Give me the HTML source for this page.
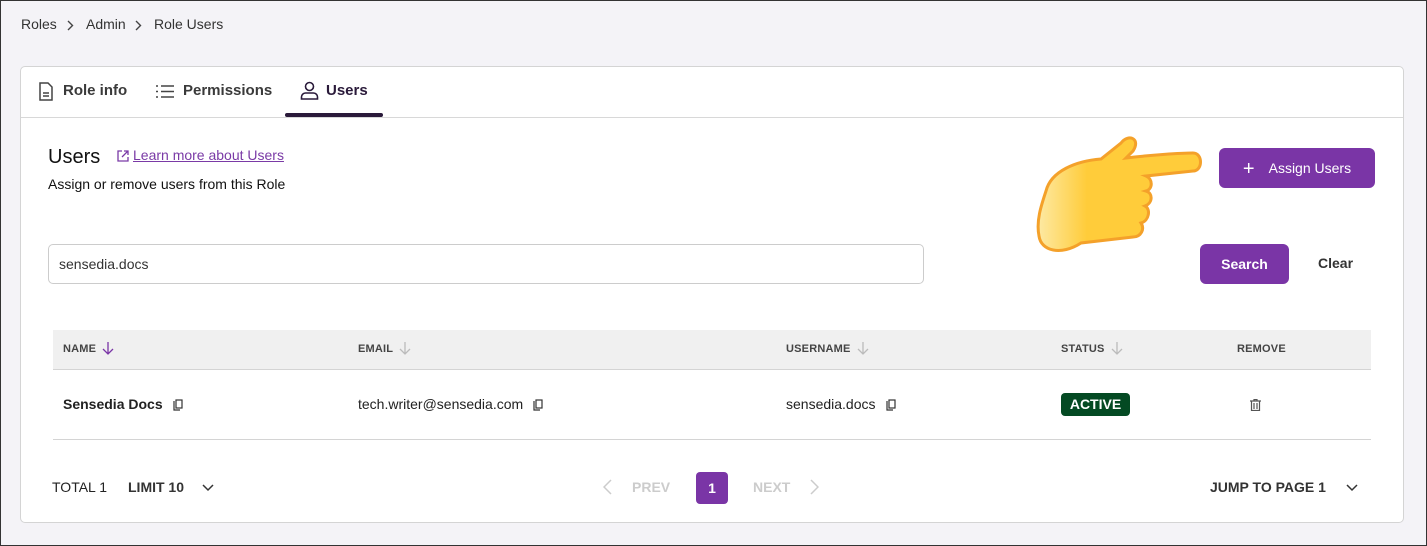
<!DOCTYPE html>
<html><head><style>
*{box-sizing:border-box;margin:0;padding:0}
body{width:1427px;height:546px;background:#f4f3f7;font-family:"Liberation Sans",sans-serif;color:#222;position:relative;overflow:hidden;border:1px solid #333}
.a{position:absolute}
.card{left:19px;top:65px;width:1384px;height:457px;background:#fff;border:1px solid #d4d4d4;border-radius:5px}
.tabs{left:0;top:0;width:100%;height:51px;border-bottom:1px solid #d8d8d8}
.tab{top:15px;font-size:15px;font-weight:bold;color:#3a3a3a}
.th{top:274px;font-size:11px;font-weight:bold;color:#444;letter-spacing:.2px}
.th svg{vertical-align:-3px;margin-left:6px}
.td{top:329px;font-size:14px}
.cp{display:inline-block;vertical-align:middle;margin-left:10px}
</style></head><body>
<div class="a" style="left:20px;top:15px;font-size:14px;color:#333">Roles</div>
<svg class="a" style="left:66px;top:19px" width="7" height="11" viewBox="0 0 7 11" fill="none" stroke="#444" stroke-width="1.4"><path d="M1 1l4.5 4.5L1 10"/></svg>
<div class="a" style="left:85px;top:15px;font-size:14px;color:#333">Admin</div>
<svg class="a" style="left:134px;top:19px" width="7" height="11" viewBox="0 0 7 11" fill="none" stroke="#444" stroke-width="1.4"><path d="M1 1l4.5 4.5L1 10"/></svg>
<div class="a" style="left:153px;top:15px;font-size:14px;color:#333">Role Users</div>
<div class="a card">
 <div class="a tabs"></div>
 <svg class="a" style="left:17px;top:15px" width="16" height="19" viewBox="0 0 16 19" fill="none" stroke="#444" stroke-width="1.5"><path d="M2 1h8l4 4v13H2z"/><path d="M5 11h6M5 14h6"/></svg>
 <div class="a tab" style="left:42px">Role info</div>
 <svg class="a" style="left:135px;top:17px" width="18" height="15" viewBox="0 0 18 15" stroke="#444" stroke-width="1.5"><path d="M5 2h13M5 7.5h13M5 13h13M0 2h2M0 7.5h2M0 13h2"/></svg>
 <div class="a tab" style="left:162px">Permissions</div>
 <svg class="a" style="left:279px;top:14px" width="19" height="19" viewBox="0 0 19 19" fill="none" stroke="#2a1a3a" stroke-width="1.6"><circle cx="9.5" cy="5.5" r="4"/><path d="M1.5 18v-2a4 4 0 0 1 4-4h8a4 4 0 0 1 4 4v2z"/></svg>
 <div class="a tab" style="left:305px;color:#2a1a3a">Users</div>
 <div class="a" style="left:264px;top:46px;width:98px;height:4px;background:#2a1a3a;border-radius:2px"></div>

 <div class="a" style="left:27px;top:79px;font-size:20px;color:#111">Users</div>
 <svg class="a" style="left:96px;top:83px" width="12" height="12" viewBox="0 0 12 12" fill="none" stroke="#7a3aa6" stroke-width="1.3"><path d="M5 1H1v10h10V7M7 1h4v4M11 1L5 7"/></svg>
 <div class="a" style="left:112px;top:80px;font-size:14px;color:#7a3aa6;text-decoration:underline">Learn more about Users</div>
 <div class="a" style="left:27px;top:109px;font-size:14px;color:#111">Assign or remove users from this Role</div>

 <div class="a" style="left:1198px;top:81px;width:156px;height:40px;background:#7a35a6;border-radius:6px;color:#fff;font-size:14px;line-height:40px;text-align:center"><span style="font-size:20px;vertical-align:-2px;margin-right:14px">+</span>Assign Users</div>
 <svg class="a" style="left:1000px;top:64px" width="190" height="130" viewBox="0 0 190 130"><defs><linearGradient id="g" x1="0" x2="1"><stop offset="0" stop-color="#fde9a3"/><stop offset=".3" stop-color="#ffcc3a"/></linearGradient></defs><path d="M25 60C30 40 55 30 80 28L100 12C108 2 120 8 112 20L105 27C130 24 160 22 172 22C182 22 182 40 172 40L125 45C132 48 132 58 125 60C132 62 132 72 124 75C130 78 128 90 120 92C124 98 120 106 112 106L60 112C40 125 20 120 18 105C15 90 20 75 25 60Z" fill="url(#g)" stroke="#f4a12a" stroke-width="3"/></svg>

 <div class="a" style="left:27px;top:177px;width:876px;height:40px;border:1px solid #ccc;border-radius:5px;font-size:14px;line-height:38px;padding-left:10px;color:#333">sensedia.docs</div>
 <div class="a" style="left:1179px;top:177px;width:89px;height:40px;background:#7a35a6;border-radius:6px;color:#fff;font-size:14px;font-weight:bold;line-height:40px;text-align:center">Search</div>
 <div class="a" style="left:1297px;top:188px;font-size:14px;font-weight:bold;color:#333">Clear</div>

 <div class="a" style="left:32px;top:263px;width:1318px;height:40px;background:#f0f0f0;border-bottom:1px solid #d4d4d4"></div>
 <div class="a th" style="left:42px">NAME<svg width="12" height="14" viewBox="0 0 12 14" fill="none" stroke="#7a35a6" stroke-width="1.3"><path d="M6 1v12M1 8l5 5 5-5"/></svg></div>
 <div class="a th" style="left:337px">EMAIL<svg width="12" height="14" viewBox="0 0 12 14" fill="none" stroke="#bbb" stroke-width="1.3"><path d="M6 1v12M1 8l5 5 5-5"/></svg></div>
 <div class="a th" style="left:765px">USERNAME<svg width="12" height="14" viewBox="0 0 12 14" fill="none" stroke="#bbb" stroke-width="1.3"><path d="M6 1v12M1 8l5 5 5-5"/></svg></div>
 <div class="a th" style="left:1040px">STATUS<svg width="12" height="14" viewBox="0 0 12 14" fill="none" stroke="#bbb" stroke-width="1.3"><path d="M6 1v12M1 8l5 5 5-5"/></svg></div>
 <div class="a th" style="left:1216px;top:276px">REMOVE</div>
 <div class="a td" style="left:42px;font-weight:bold">Sensedia Docs<svg class="cp" width="10" height="12" viewBox="0 0 10 12" fill="none" stroke="#333" stroke-width="1.2"><path d="M1 2v9h6"/><rect x="3" y="1" width="6" height="8"/></svg></div>
 <div class="a td" style="left:337px">tech.writer@sensedia.com<svg class="cp" width="10" height="12" viewBox="0 0 10 12" fill="none" stroke="#333" stroke-width="1.2"><path d="M1 2v9h6"/><rect x="3" y="1" width="6" height="8"/></svg></div>
 <div class="a td" style="left:765px">sensedia.docs<svg class="cp" width="10" height="12" viewBox="0 0 10 12" fill="none" stroke="#333" stroke-width="1.2"><path d="M1 2v9h6"/><rect x="3" y="1" width="6" height="8"/></svg></div>
 <div class="a" style="left:1040px;top:326px;width:69px;height:23px;background:#044a23;border-radius:4px;color:#fff;font-size:14px;font-weight:bold;line-height:23px;text-align:center">ACTIVE</div>
 <svg class="a" style="left:1229px;top:332px" width="11" height="12" viewBox="0 0 11 12" fill="none" stroke="#555" stroke-width="1.2"><path d="M0 2h11M4 2V0.5h3V2M1.5 2v9.5h8V2M4 4v6M7 4v6"/></svg>
 <div class="a" style="left:32px;top:372px;width:1318px;height:1px;background:#d4d4d4"></div>

 <div class="a" style="left:31px;top:412px;font-size:14px;color:#222">TOTAL 1</div>
 <div class="a" style="left:107px;top:412px;font-size:14px;font-weight:bold;color:#333">LIMIT 10</div>
 <svg class="a" style="left:181px;top:417px" width="12" height="8" viewBox="0 0 12 8" fill="none" stroke="#333" stroke-width="1.5"><path d="M1 1l5 5 5-5"/></svg>
 <svg class="a" style="left:582px;top:412px" width="9" height="16" viewBox="0 0 9 16" fill="none" stroke="#ccc" stroke-width="1.5"><path d="M8 1L1 8l7 7"/></svg>
 <div class="a" style="left:611px;top:412px;font-size:14px;font-weight:bold;color:#ccc">PREV</div>
 <div class="a" style="left:675px;top:405px;width:32px;height:32px;background:#7a35a6;border-radius:4px;color:#fff;font-size:14px;font-weight:bold;line-height:32px;text-align:center">1</div>
 <div class="a" style="left:732px;top:412px;font-size:14px;font-weight:bold;color:#ccc">NEXT</div>
 <svg class="a" style="left:789px;top:412px" width="9" height="16" viewBox="0 0 9 16" fill="none" stroke="#ccc" stroke-width="1.5"><path d="M1 1l7 7-7 7"/></svg>
 <div class="a" style="left:1189px;top:412px;font-size:14px;font-weight:bold;color:#333">JUMP TO PAGE 1</div>
 <svg class="a" style="left:1325px;top:417px" width="12" height="8" viewBox="0 0 12 8" fill="none" stroke="#333" stroke-width="1.5"><path d="M1 1l5 5 5-5"/></svg>
</div>
</body></html>
